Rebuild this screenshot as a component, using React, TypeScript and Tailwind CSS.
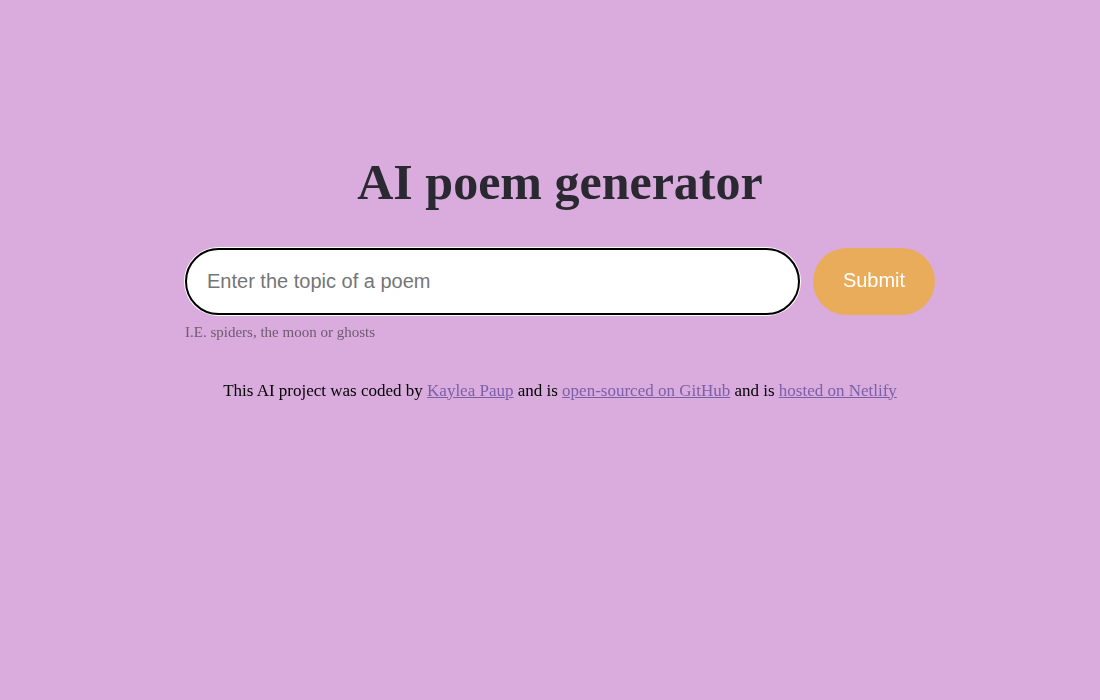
export default function App() {
	return (
		<div className="min-h-[700px] bg-[#d9acdd] pl-[20px] font-['Liberation_Serif',serif]">
			<div className="mx-auto flex w-[750px] flex-col pt-[148px]">
				<h1 className="text-center text-[50px] font-bold leading-[68px] text-[#2a2830]">
					AI poem generator
				</h1>
				<form
					className="mt-[32px] flex items-center gap-[13px]"
					onSubmit={(e) => e.preventDefault()}
				>
					<input
						autoFocus
						type="text"
						placeholder="Enter the topic of a poem"
						className="h-[67px] w-[615px] rounded-full border-2 border-black bg-white px-[20px] font-['Liberation_Sans',sans-serif] text-[20px] text-black shadow-[0_0_0_1px_white] outline-none placeholder:text-[#757575]"
					/>
					<button
						type="submit"
						className="h-[67px] w-[122px] rounded-full bg-[#e9ac5b] pb-[4px] font-['Liberation_Sans',sans-serif] text-[20px] text-white"
					>
						Submit
					</button>
				</form>
				<p className="mt-[6px] text-[15px] text-[#6f5a72]">
					I.E. spiders, the moon or ghosts
				</p>
				<p className="mt-[34px] text-center text-[17px] text-black">
					This AI project was coded by{" "}
					<a href="#" className="text-[#7b5fa8] underline">
						Kaylea Paup
					</a>{" "}
					and is{" "}
					<a href="#" className="text-[#7b5fa8] underline">
						open-sourced on GitHub
					</a>{" "}
					and is{" "}
					<a href="#" className="text-[#7b5fa8] underline">
						hosted on Netlify
					</a>
				</p>
			</div>
		</div>
	);
}
